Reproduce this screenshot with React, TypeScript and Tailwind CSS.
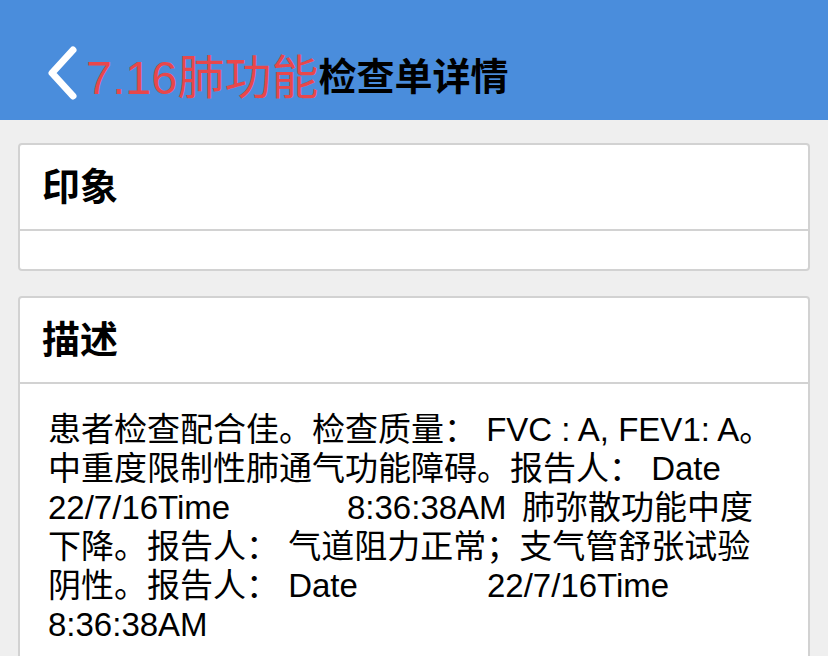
const font = { fontFamily: '"Liberation Sans", "Noto Sans CJK SC", sans-serif' };

function Card({ title, children }: { title: string; children?: React.ReactNode }) {
  return (
    <div className="mx-[18px] border-2 border-[#d2d2d2] rounded-[4px] bg-white overflow-hidden">
      <div className="h-[86px] flex items-center pl-[22px] border-b-2 border-[#d2d2d2]">
        <span className="text-[38px] font-bold text-black leading-none">{title}</span>
      </div>
      {children}
    </div>
  );
}

export default function App() {
  return (
    <div className="w-[828px] h-[656px] bg-[#efefef] overflow-hidden" style={font}>
      <div className="h-[120px] bg-[#4a8ddc] flex items-center pl-[46px] pt-[34px]">
        <svg width="32" height="56" viewBox="0 0 32 56" className="shrink-0 -mt-[8px]">
          <polyline points="27,5 6,28 27,51" fill="none" stroke="#fff" strokeWidth="7" strokeLinecap="round" strokeLinejoin="round" />
        </svg>
        <span className="ml-[8px] text-[47px] text-[#e8474b] leading-none">7.16肺功能</span>
        <span className="text-[38px] font-bold text-black leading-none">检查单详情</span>
      </div>

      <div className="pt-[23px] flex flex-col gap-[25px]">
        <Card title="印象">
          <div className="h-[38px]" />
        </Card>
        <Card title="描述">
          <div className="pl-[28px] pt-[26px] pb-[20px] text-[33px] leading-[39px] text-black whitespace-pre">
            <div>患者检查配合佳。检查质量： FVC : A, FEV1: A。</div>
            <div>中重度限制性肺通气功能障碍。报告人： Date</div>
            <div>
              <span className="inline-block w-[299px]">22/7/16Time</span>
              <span className="inline-block w-[175px]">8:36:38AM</span>
              <span>肺弥散功能中度</span>
            </div>
            <div>下降。报告人： 气道阻力正常；支气管舒张试验</div>
            <div>
              <span className="inline-block w-[439px]">阴性。报告人： Date</span>
              <span>22/7/16Time</span>
            </div>
            <div>8:36:38AM</div>
          </div>
        </Card>
      </div>
    </div>
  );
}
